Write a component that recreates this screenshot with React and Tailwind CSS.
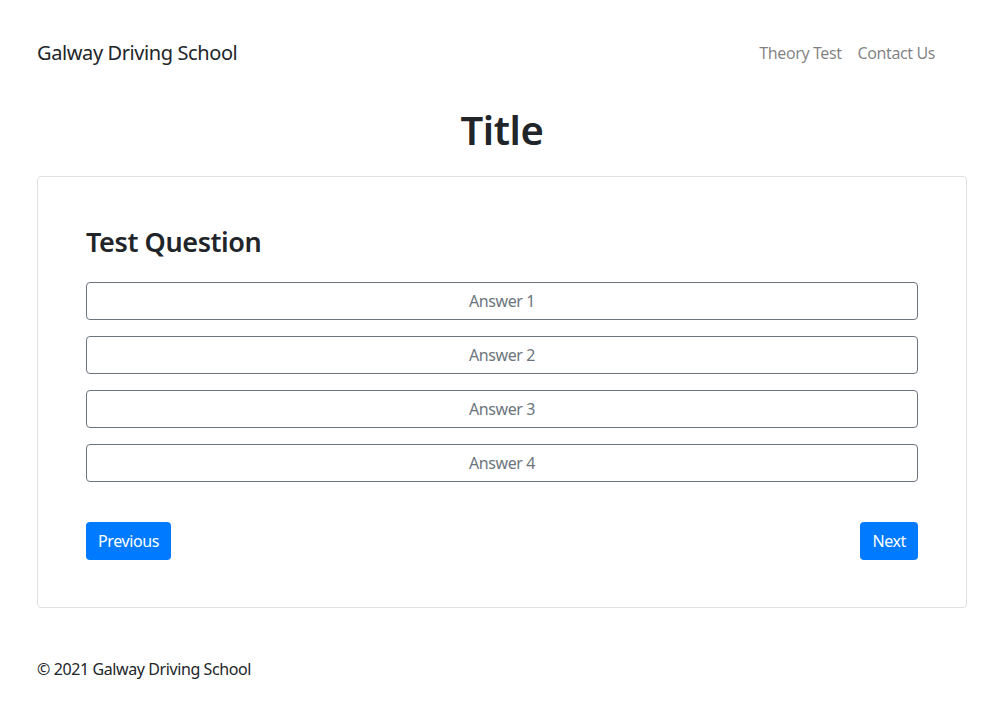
const answers = ['Answer 1', 'Answer 2', 'Answer 3', 'Answer 4']

const App = () => {
  return (
    <div className="min-h-[712px] bg-white text-[#212529] font-['Noto_Sans',sans-serif] tracking-[-0.025em]">
      <div className="w-[930px] ml-[37px]">
        {/* Navbar */}
        <nav className="flex items-center justify-between pt-[38px] h-[68px]">
          <a className="text-[20px] leading-[30px] text-[#212529]">Galway Driving School</a>
          <div className="flex gap-4 mr-[32px] text-[16px] leading-6 text-[rgba(0,0,0,0.5)]">
            <a>Theory Test</a>
            <a>Contact Us</a>
          </div>
        </nav>

        <h1 className="mt-[38px] text-center text-[40px] leading-[48px] font-semibold">Title</h1>

        {/* Card */}
        <div className="mt-[22px] border border-[#dfdfdf] rounded px-[48px] pt-[48px] pb-[47px]">
          <h3 className="text-[27px] leading-[34px] font-semibold mb-[23px]">Test Question</h3>
          <div className="flex flex-col gap-4">
            {answers.map((a) => (
              <button
                key={a}
                className="h-[38px] w-full border border-[#6c757d] rounded text-[16px] text-[#6c757d] bg-white"
              >
                {a}
              </button>
            ))}
          </div>
          <div className="flex justify-between mt-[40px]">
            <button className="h-[38px] px-3 rounded bg-[#007bff] text-white text-[16px]">Previous</button>
            <button className="h-[38px] px-3 rounded bg-[#007bff] text-white text-[16px]">Next</button>
          </div>
        </div>

        {/* Footer */}
        <footer className="mt-[49px] text-[16px] leading-6">© 2021 Galway Driving School</footer>
      </div>
    </div>
  )
}

export default App
